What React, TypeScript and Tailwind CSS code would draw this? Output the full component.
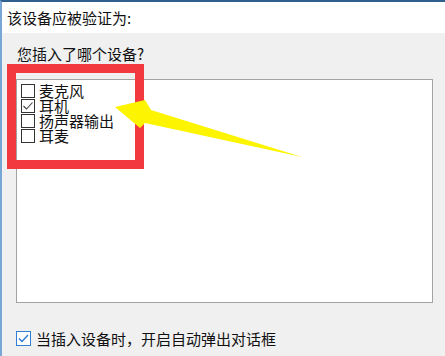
import React from 'react';

const font = { fontFamily: '"Noto Sans CJK SC", "Microsoft YaHei", sans-serif' };

function ListCheck({ checked }: { checked?: boolean }) {
  return (
    <span className="flex h-[14px] w-[14px] shrink-0 items-center justify-center border border-[#333333] bg-white">
      {checked && (
        <svg width="12" height="12" viewBox="0 0 12 12">
          <path d="M1.5 6 L4.5 9 L10.5 2.5" fill="none" stroke="#444" strokeWidth="1.1" />
        </svg>
      )}
    </span>
  );
}

export default function App() {
  const items = [
    { label: '麦克风', checked: false },
    { label: '耳机', checked: true },
    { label: '扬声器输出', checked: false },
    { label: '耳麦', checked: false },
  ];

  return (
    <div
      className="relative flex h-[356px] w-[445px] flex-col overflow-hidden border-t-2 border-l-2 border-t-[#2f5f8e] border-l-[#78a6d6] bg-[#f0f0f0] text-[15px] text-[#111]"
      style={font}
    >
      {/* 标题栏 */}
      <div className="flex h-[31px] items-center bg-white pl-[5px] leading-none">该设备应被验证为:</div>

      <div className="flex flex-1 flex-col pl-[14px] pr-[11px]">
        <div className="mt-[12px] pl-[1px] leading-[18px]">您插入了哪个设备?</div>

        {/* 列表框 */}
        <div className="mt-[16px] h-[224px] w-[417px] border border-[#a3a3a3] bg-white pl-[4px] pt-[3px]">
          {items.map((it) => (
            <div key={it.label} className="flex h-[15px] items-center gap-[4px]">
              <ListCheck checked={it.checked} />
              <span className="text-[15px] leading-[15px]">{it.label}</span>
            </div>
          ))}
        </div>

        <div className="mt-[28px] flex items-center gap-[5px] leading-none">
          <span className="flex h-[15px] w-[15px] items-center justify-center border border-[#2f7fd6] bg-white">
            <svg width="13" height="13" viewBox="0 0 13 13">
              <path d="M2 6.5 L5 9.5 L11 3" fill="none" stroke="#2f7fd6" strokeWidth="1.5" />
            </svg>
          </span>
          <span>当插入设备时，开启自动弹出对话框</span>
        </div>
      </div>

      {/* 红色标注框 */}
      <div className="absolute left-[5px] top-[62px] h-[105px] w-[137px] border-[9px] border-[#f2393f]" />

      {/* 黄色箭头 */}
      <svg className="absolute left-0 top-0" width="445" height="356" viewBox="0 0 445 356">
        <path
          d="M113 105 L143 98 L149 108 L300 155 L143 121 L138 126 Z"
          fill="#fcf400"
        />
      </svg>
    </div>
  );
}
